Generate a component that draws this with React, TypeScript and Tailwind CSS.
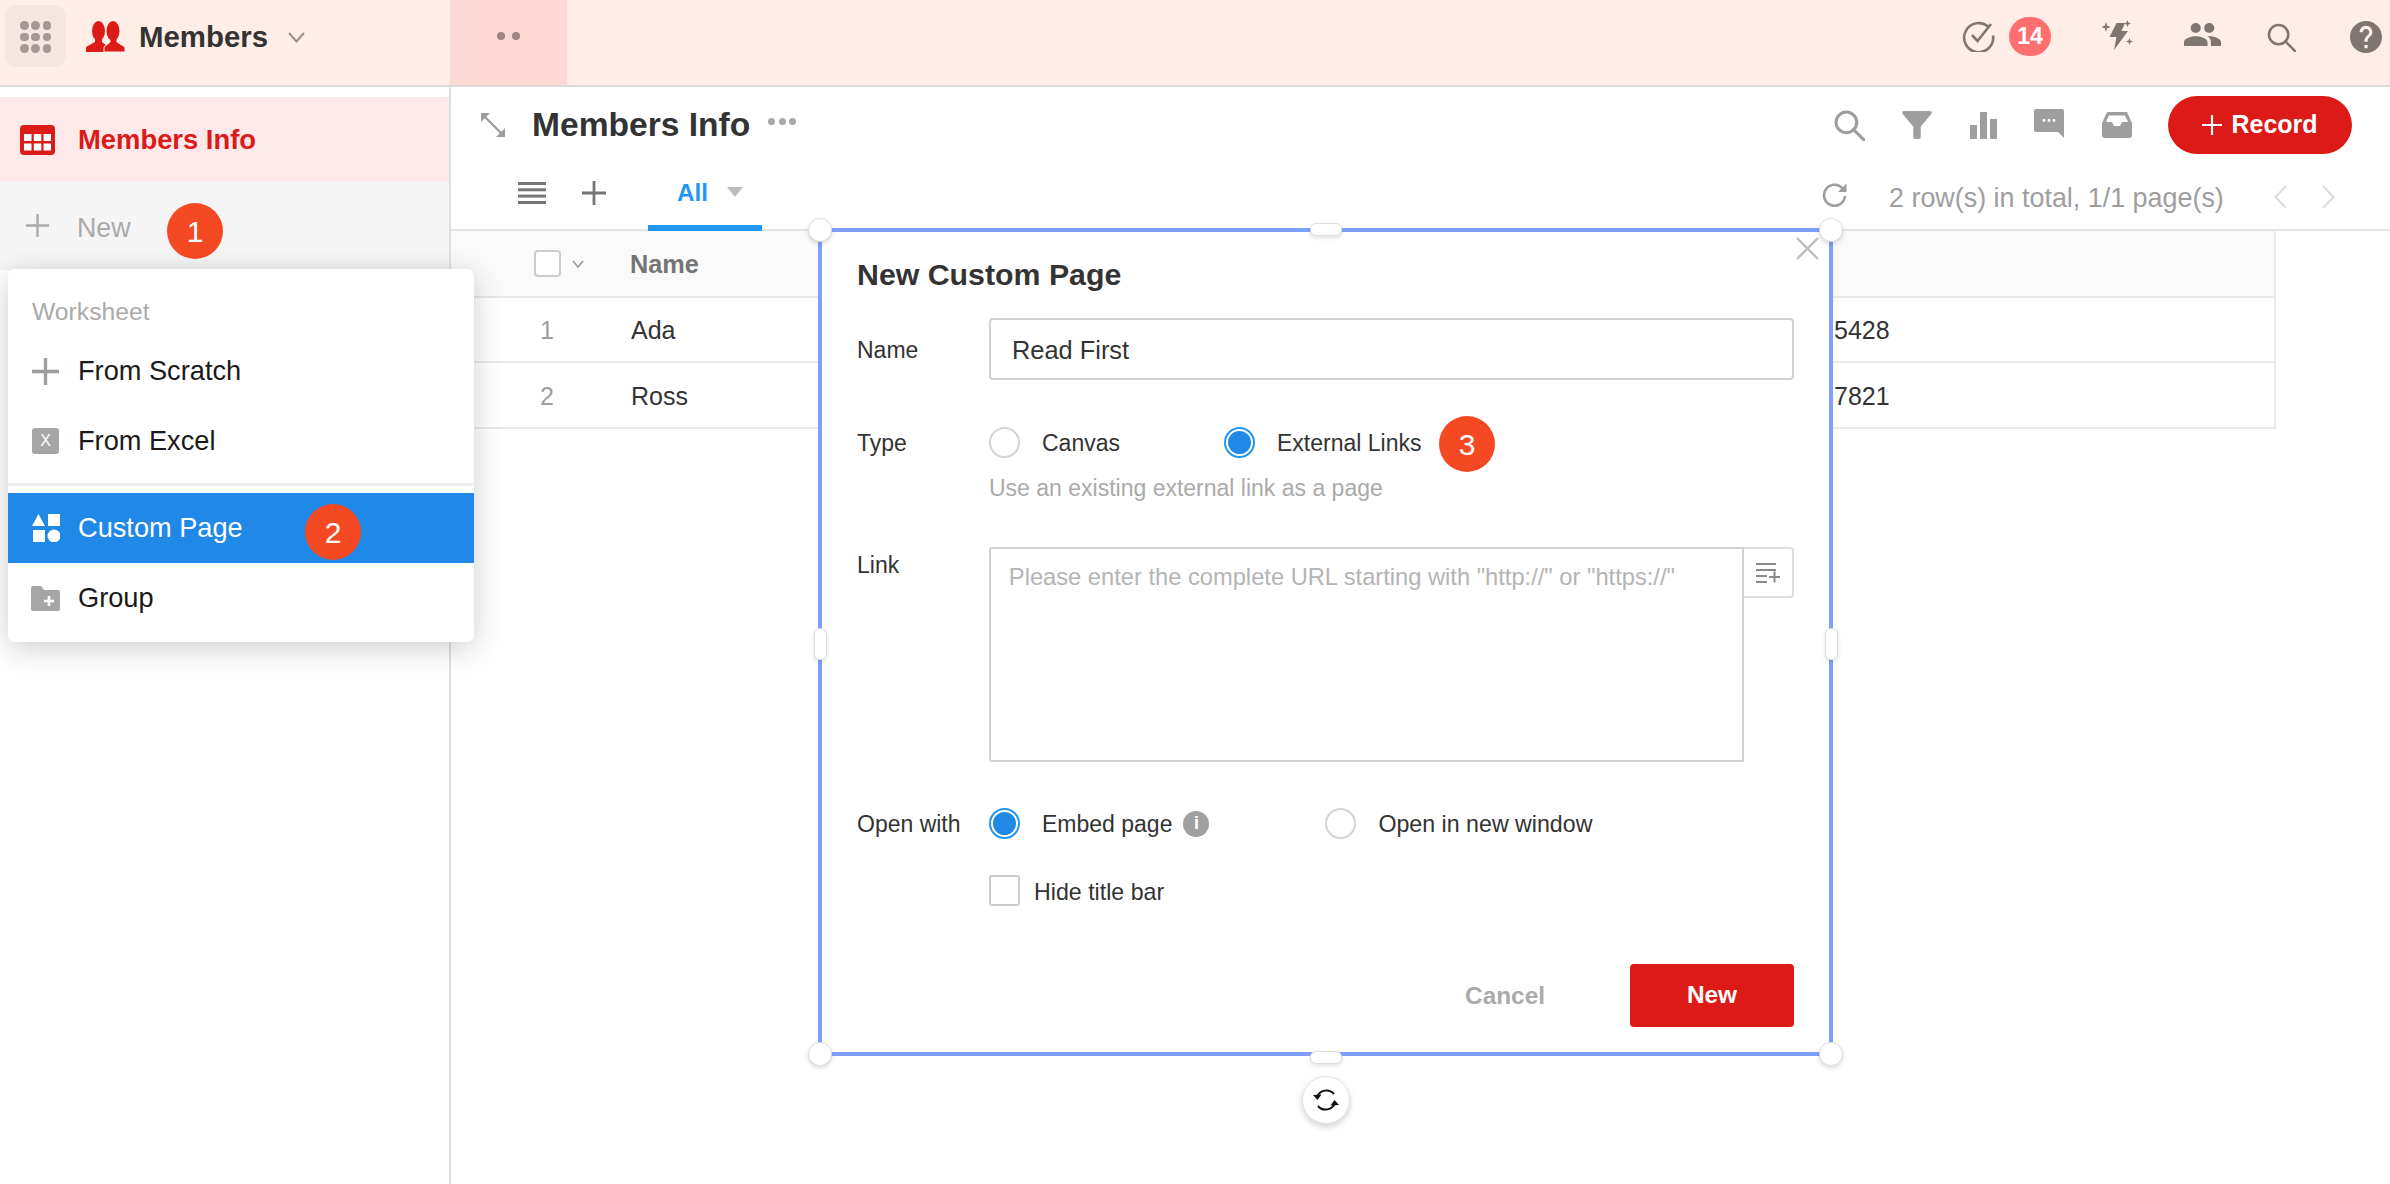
import React from "react";

const Badge = ({ n, className }: { n: string; className: string }) => (
  <div className={`absolute w-[56px] h-[56px] rounded-full bg-[#f44923] text-white text-[30px] flex items-center justify-center ${className}`}>{n}</div>
);

const Radio = ({ on = false }: { on?: boolean }) =>
  on ? (
    <span className="w-[31px] h-[31px] rounded-full border-2 border-[#2196f3] flex items-center justify-center shrink-0">
      <span className="w-[23px] h-[23px] rounded-full bg-[#2088e6]" />
    </span>
  ) : (
    <span className="w-[31px] h-[31px] rounded-full border-2 border-[#d4d4d4] shrink-0" />
  );

const SearchIcon = ({ color, size, sw }: { color: string; size: number; sw: number }) => (
  <svg width={size} height={size} viewBox="0 0 30 30" fill="none" stroke={color} strokeWidth={sw}>
    <circle cx="12" cy="12" r="10" />
    <path d="M19 19 L29 29" strokeLinecap="round" />
  </svg>
);

const Plus = ({ size, color, sw }: { size: number; color: string; sw: number }) => (
  <svg width={size} height={size} viewBox="0 0 24 24" stroke={color} strokeWidth={sw} fill="none">
    <path d="M12 0V24M0 12H24" />
  </svg>
);

const Corner = ({ className }: { className: string }) => (
  <div className={`absolute w-[24px] h-[24px] rounded-full bg-white border border-[#ddd] shadow-[0_2px_4px_rgba(0,0,0,0.15)] ${className}`} />
);

export default function App() {
  return (
    <div className="relative w-[2390px] h-[1184px] overflow-hidden bg-white flex flex-col font-['Liberation_Sans',Arial,sans-serif] text-[#333]">
      {/* top bar */}
      <header className="h-[87px] shrink-0 bg-[#ffeee7] border-b-2 border-[#dedada] flex items-stretch">
        <div className="w-[450px] flex items-start pl-[5px] pt-[5px]">
          <div className="w-[61px] h-[62px] rounded-[12px] bg-[#f6e6e1] grid grid-cols-3 gap-x-[3px] gap-y-[3px] px-[15px] py-[16px]">
            {Array.from({ length: 9 }).map((_, i) => (
              <span key={i} className="w-[8.5px] h-[8.5px] rounded-full bg-[#a39894]" />
            ))}
          </div>
          <svg className="ml-[20px] mt-[16px]" width="39" height="31" viewBox="0 0 39 31" fill="#dc1a18">
            <ellipse cx="12.5" cy="10" rx="6.5" ry="10" />
            <path d="M9 16 H16 V21 L21 25 V31 H0 V26 L9 21Z" />
            <path d="M24 16 H31 V21 L39 26 V31 H18 V26 L24 21Z" stroke="#ffeee7" strokeWidth="1" />
            <ellipse cx="27" cy="10" rx="6.5" ry="10" />
          </svg>
          <span className="ml-[14px] mt-[15px] text-[29.4px] leading-[34px] font-bold text-[#333]">Members</span>
          <svg className="ml-[20px] mt-[27px]" width="17" height="11" viewBox="0 0 17 11" fill="none" stroke="#9a9090" strokeWidth="2">
            <path d="M1 1 L8.5 9.5 L16 1" />
          </svg>
        </div>
        <div className="w-[117px] bg-[#fdd8d4] flex items-start justify-center gap-[7px] pt-[32px]">
          <span className="w-[8px] h-[8px] rounded-full bg-[#9c8582]" />
          <span className="w-[8px] h-[8px] rounded-full bg-[#9c8582]" />
        </div>
        <div className="ml-auto pr-[8px] flex items-start pt-[17px]">
          <svg className="mt-[2px]" width="33" height="33" viewBox="0 0 33 33" fill="none" stroke="#7f7672" strokeWidth="2.6">
            <path d="M27 8.5 A14.5 14.5 0 1 0 31 16.5" />
            <path d="M10 16 L15.5 22 L29 5" />
          </svg>
          <span className="ml-[14px] w-[42px] h-[39px] rounded-full bg-[#ff6f70] text-white font-bold text-[23px] flex items-center justify-center">14</span>
          <svg className="ml-[51px] mt-[3px]" width="31" height="30" viewBox="0 0 31 30" fill="#7f7672">
            <path d="M14.5 3 L23 3 L19.5 11 L26 11 L12 30 L14.5 17 L7.5 17 Z" />
            <path d="M4 2 L5.2 5.8 L9 7 L5.2 8.2 L4 12 L2.8 8.2 L-1 7 L2.8 5.8Z" />
            <path d="M25.5 0 L26.4 2.6 L29 3.5 L26.4 4.4 L25.5 7 L24.6 4.4 L22 3.5 L24.6 2.6Z" />
            <path d="M27.5 18 L28.4 20.6 L31 21.5 L28.4 22.4 L27.5 25 L26.6 22.4 L24 21.5 L26.6 20.6Z" />
          </svg>
          <svg className="ml-[51px] mt-[6px]" width="37" height="23" viewBox="1 5 22 14" preserveAspectRatio="none" fill="#7f7672">
            <path d="M16 11c1.66 0 2.99-1.34 2.99-3S17.66 5 16 5c-1.66 0-3 1.34-3 3s1.34 3 3 3zm-8 0c1.66 0 2.99-1.34 2.99-3S9.66 5 8 5C6.34 5 5 6.34 5 8s1.34 3 3 3zm0 2c-2.33 0-7 1.17-7 3.5V19h14v-2.5c0-2.33-4.67-3.5-7-3.5zm8 0c-.29 0-.62.02-.97.05 1.16.84 1.97 1.97 1.97 3.45V19h6v-2.5c0-2.33-4.67-3.5-7-3.5z" />
          </svg>
          <span className="ml-[46px] mt-[6px]"><SearchIcon color="#7f7672" size={29} sw={2.6} /></span>
          <svg className="ml-[54px] mt-[4px]" width="32" height="32" viewBox="2 2 20 20" fill="#7f7672">
            <path d="M12 2C6.48 2 2 6.48 2 12s4.48 10 10 10 10-4.48 10-10S17.52 2 12 2zm1 17h-2v-2h2v2zm2.07-7.75l-.9.92C13.45 12.9 13 13.5 13 15h-2v-.5c0-1.1.45-2.1 1.17-2.83l1.24-1.26c.37-.36.59-.86.59-1.41 0-1.1-.9-2-2-2s-2 .9-2 2H8c0-2.21 1.79-4 4-4s4 1.79 4 4c0 .88-.36 1.68-.93 2.25z" />
          </svg>
        </div>
      </header>

      <div className="flex-1 flex min-h-0">
        {/* sidebar */}
        <aside className="w-[451px] shrink-0 border-r-2 border-[#e0e0e0] pt-[10px]">
          <div className="h-[85px] bg-[#fde8ea] flex items-center pl-[20px]">
            <svg width="35" height="30" viewBox="0 0 35 30">
              <rect width="35" height="30" rx="4" fill="#dc1a18" />
              <g fill="#fff">
                <rect x="4" y="9" width="7.5" height="7" /><rect x="13.8" y="9" width="7.5" height="7" /><rect x="23.5" y="9" width="7.5" height="7" />
                <rect x="4" y="18.5" width="7.5" height="7" /><rect x="13.8" y="18.5" width="7.5" height="7" /><rect x="23.5" y="18.5" width="7.5" height="7" />
              </g>
            </svg>
            <span className="ml-[23px] text-[27.4px] font-bold text-[#dc1a18]">Members Info</span>
          </div>
          <div className="h-[88px] bg-[#f5f5f5] flex items-start pl-[26px] pt-[32px]">
            <Plus size={23} color="#aaa" sw={2.5} />
            <span className="ml-[28px] -mt-[6px] text-[26.8px] text-[#aaa]">New</span>
          </div>
        </aside>

        {/* main */}
        <main className="flex-1 min-w-0 flex flex-col">
          <div className="h-[76px] shrink-0 flex items-center pl-[29px] pr-[38px]">
            <svg width="26" height="26" viewBox="0 0 26 26" fill="none" stroke="#9e9e9e" strokeWidth="2.4">
              <path d="M3 3 L23 23" />
              <path d="M1 10 V1 H10 Z" fill="#9e9e9e" stroke="none" />
              <path d="M25 16 V25 H16 Z" fill="#9e9e9e" stroke="none" />
            </svg>
            <span className="ml-[26px] text-[33.6px] font-bold text-[#333]">Members Info</span>
            <span className="ml-[18px] mb-[8px] flex gap-[3.5px]">
              <i className="w-[7px] h-[7px] rounded-full bg-[#a8a8a8]" />
              <i className="w-[7px] h-[7px] rounded-full bg-[#a8a8a8]" />
              <i className="w-[7px] h-[7px] rounded-full bg-[#a8a8a8]" />
            </span>
            <div className="ml-auto flex items-center">
              <span className="w-[32px] ml-[1px]"><SearchIcon color="#9e9e9e" size={31} sw={3} /></span>
              <svg className="ml-[36px]" width="30" height="28" viewBox="4 4 16 16" preserveAspectRatio="none" fill="#9e9e9e">
                <path d="M4.25 5.61C6.27 8.2 10 13 10 13v6c0 .55.45 1 1 1h2c.55 0 1-.45 1-1v-6s3.72-4.8 5.74-7.39c.51-.66.04-1.61-.79-1.61H5.04c-.83 0-1.3.95-.79 1.61z" />
              </svg>
              <svg className="ml-[38px]" width="27" height="27" viewBox="0 0 27 27" fill="#9e9e9e">
                <rect x="0" y="13" width="7" height="14" /><rect x="10" y="0" width="7" height="27" /><rect x="20" y="7" width="7" height="20" />
              </svg>
              <svg className="ml-[37px] mb-[3px]" width="30" height="29" viewBox="0 0 30 29" fill="#9e9e9e">
                <path d="M2 0 H28 A2 2 0 0 1 30 2 V29 L24 23 H2 A2 2 0 0 1 0 21 V2 A2 2 0 0 1 2 0Z" />
                <circle cx="10" cy="11.5" r="1.4" fill="#fff" /><circle cx="15" cy="11.5" r="1.4" fill="#fff" /><circle cx="20" cy="11.5" r="1.4" fill="#fff" />
              </svg>
              <svg className="ml-[38px]" width="30" height="26" viewBox="0 0 30 26" fill="#9e9e9e">
                <path d="M5 0 H25 L30 11 V23 A3 3 0 0 1 27 26 H3 A3 3 0 0 1 0 23 V11 Z" />
                <path d="M4 10 H10 L12 14 H18 L20 10 H26 L23 3.5 H7 Z" fill="#fff" />
              </svg>
              <button className="ml-[36px] w-[184px] h-[58px] rounded-full bg-[#dc1a18] text-white font-bold text-[25px] flex items-center justify-center gap-[9px]">
                <Plus size={20} color="#fff" sw={2.6} />
                Record
              </button>
            </div>
          </div>

          <div className="h-[68px] shrink-0 border-b-2 border-[#e4e4e4] flex items-stretch pl-[67px] pr-[55px]">
            <div className="flex items-center pb-[6px]">
              <svg width="28" height="22" viewBox="0 0 28 22" fill="#757575">
                <rect width="28" height="3" /><rect y="6.3" width="28" height="3" /><rect y="12.6" width="28" height="3" /><rect y="19" width="28" height="3" />
              </svg>
              <span className="ml-[36px]"><Plus size={24} color="#757575" sw={2.8} /></span>
            </div>
            <div className="ml-[42px] w-[114px] border-b-[6px] border-[#2196f3] flex items-center pl-[29px] -mb-[2px] pb-[2px]">
              <span className="text-[24.3px] font-bold text-[#2196f3]">All</span>
              <svg className="ml-[19px] mb-[3px]" width="16" height="10" viewBox="0 0 16 10" fill="#bdbdbd"><path d="M0 0H16L8 10Z" /></svg>
            </div>
            <div className="ml-auto flex items-center pt-[2px]">
              <svg className="mb-[3px]" width="26" height="25" viewBox="0 0 26 25" fill="none" stroke="#9e9e9e" strokeWidth="2.6">
                <path d="M22 6 A10.5 10.5 0 1 0 24 13" />
                <path d="M25.5 0.5 V9 H17Z" fill="#9e9e9e" stroke="none" />
              </svg>
              <span className="ml-[42px] w-[337px] pt-[2px] text-[26.9px] text-[#9e9e9e] whitespace-nowrap">2 row(s) in total, 1/1 page(s)</span>
              <svg className="ml-[48px]" width="13" height="24" viewBox="0 0 13 24" fill="none" stroke="#ddd" strokeWidth="2.2"><path d="M12 1 L1.5 12 L12 23" /></svg>
              <svg className="ml-[35px]" width="13" height="24" viewBox="0 0 13 24" fill="none" stroke="#ddd" strokeWidth="2.2"><path d="M1 1 L11.5 12 L1 23" /></svg>
            </div>
          </div>

          <div className="w-[1825px] border-r-2 border-[#eaeaea] text-[25px]">
            <div className="h-[67px] bg-[#fafafa] border-b-2 border-[#e8e8e8] grid grid-cols-[179px_1204px_1fr] items-center">
              <div className="pl-[83px] flex items-center">
                <span className="w-[27px] h-[27px] rounded-[4px] border-2 border-[#ccc] bg-white" />
                <svg className="ml-[11px]" width="12" height="8" viewBox="0 0 12 8" fill="none" stroke="#999" strokeWidth="1.6"><path d="M1 1 L6 7 L11 1" /></svg>
              </div>
              <span className="pt-[3px] font-bold text-[#757575] text-[25.3px]">Name</span>
            </div>
            <div className="h-[65px] pt-[3px] border-b-2 border-[#eaeaea] grid grid-cols-[180px_1203px_1fr] items-center">
              <span className="pl-[89px] text-[#9e9e9e]">1</span>
              <span className="text-[#333]">Ada</span>
              <span className="text-[#333]">5428</span>
            </div>
            <div className="h-[66px] pt-[3px] border-b-2 border-[#eaeaea] grid grid-cols-[180px_1203px_1fr] items-center">
              <span className="pl-[89px] text-[#9e9e9e]">2</span>
              <span className="text-[#333]">Ross</span>
              <span className="text-[#333]">7821</span>
            </div>
          </div>
        </main>
      </div>

      {/* + New dropdown */}
      <div className="absolute left-[8px] top-[269px] w-[466px] bg-white rounded-[7px] shadow-[0_6px_30px_rgba(0,0,0,0.2)] pt-[26px] pb-[9px] text-[27.2px] text-[#1a1a1a]">
        <div className="h-[34px] pl-[24px] flex items-center text-[24.7px] text-[#aaa]">Worksheet</div>
        <div className="mt-[7px] h-[70px] pl-[24px] flex items-center">
          <span className="w-[27px]"><Plus size={27} color="#9e9e9e" sw={3} /></span>
          <span className="ml-[19px]">From Scratch</span>
        </div>
        <div className="h-[70px] pl-[24px] flex items-center">
          <span className="w-[27px] h-[26px] rounded-[3px] bg-[#a6a6a6] text-white text-[16px] flex items-center justify-center">X</span>
          <span className="ml-[19px]">From Excel</span>
        </div>
        <div className="mt-[7px] h-[3px] bg-[#f0f0f0]" />
        <div className="mt-[7px] h-[70px] bg-[#2088e6] pl-[24px] flex items-center text-white">
          <svg width="28" height="28" viewBox="0 0 28 28" fill="#fff">
            <path d="M6.5 0 L13 12 H0Z" />
            <rect x="16" y="0" width="12" height="12" />
            <rect x="1" y="16" width="12" height="12" />
            <circle cx="22" cy="22" r="6.5" />
          </svg>
          <span className="ml-[18px]">Custom Page</span>
        </div>
        <div className="h-[70px] pl-[23px] flex items-center">
          <svg width="29" height="25" viewBox="0 0 29 25" fill="#a6a6a6">
            <path d="M2 0 H10 L13 4 H27 A2 2 0 0 1 29 6 V23 A2 2 0 0 1 27 25 H2 A2 2 0 0 1 0 23 V2 A2 2 0 0 1 2 0Z" />
            <path d="M18 10 V20 M13 15 H23" stroke="#fff" strokeWidth="2.6" />
          </svg>
          <span className="ml-[18px]">Group</span>
        </div>
      </div>

      {/* dialog with selection frame */}
      <div className="absolute left-[818px] top-[228px] w-[1015px] h-[828px] bg-white border-4 border-[#7f9fff] text-[23px] text-[#333]">
        <div className="pl-[35px] pr-[35px] pt-[23px] flex flex-col">
          <div className="text-[30.3px] leading-[40px] font-bold text-[#333]">New Custom Page</div>
          <div className="mt-[23px] flex items-center h-[62px]">
            <span className="w-[132px] pt-[2px]">Name</span>
            <input readOnly value="Read First" className="w-[805px] h-full border-2 border-[#d0d0d0] rounded-[4px] px-[21px] pt-[2px] text-[25.4px] text-[#333] outline-none" />
          </div>
          <div className="mt-[47px] flex items-center h-[31px]">
            <span className="w-[132px] pt-[1px]">Type</span>
            <Radio />
            <span className="ml-[22px] w-[182px] pt-[1px]">Canvas</span>
            <Radio on />
            <span className="ml-[22px] pt-[1px]">External Links</span>
          </div>
          <div className="mt-[15px] h-[30px] pl-[132px] flex items-center text-[#aaa]">Use an existing external link as a page</div>
          <div className="mt-[44px] flex items-start">
            <span className="w-[132px] leading-[32px] pt-[2px]">Link</span>
            <textarea readOnly placeholder={'Please enter the complete URL starting with "http://" or "https://"'} className="w-[756px] h-[215px] resize-none border-2 border-[#d0d0d0] rounded-l-[3px] px-[18px] py-[11px] text-[23.7px] placeholder:text-[#b4b4b4] outline-none" />
            <span className="w-[50px] h-[51px] border-2 border-l-0 border-[#ddd] rounded-r-[4px] flex items-center justify-center">
              <svg width="24" height="20" viewBox="0 0 24 20" fill="none" stroke="#8a8a8a" strokeWidth="2">
                <path d="M0 1 H20 M0 7 H20 M0 13 H11 M0 19 H11 M13 14 H24 M18.5 8.5 V19.5" />
              </svg>
            </span>
          </div>
          <div className="mt-[46px] flex items-center h-[31px]">
            <span className="w-[132px] pt-[1px]">Open with</span>
            <Radio on />
            <span className="ml-[22px] pt-[1px]">Embed page</span>
            <span className="ml-[11px] w-[26px] h-[26px] rounded-full bg-[#a0a0a0] text-white text-[18px] font-bold flex items-center justify-center">i</span>
            <span className="ml-[116px] flex"><Radio /></span>
            <span className="ml-[22px] pt-[1px] text-[23.2px]">Open in new window</span>
          </div>
          <div className="mt-[36px] flex items-center h-[31px] pl-[132px]">
            <span className="w-[31px] h-[31px] rounded-[3px] border-2 border-[#ccc]" />
            <span className="ml-[14px] pt-[3px] text-[23.2px]">Hide title bar</span>
          </div>
          <div className="mt-[58px] w-[937px] flex items-center justify-end">
            <span className="text-[24.4px] pt-[2px] font-bold text-[#aaa] mr-[85px]">Cancel</span>
            <button className="w-[164px] h-[63px] rounded-[4px] bg-[#dc1a18] text-white text-[24.4px] font-bold">New</button>
          </div>
        </div>

        <svg className="absolute right-[10px] top-[5px]" width="23" height="23" viewBox="0 0 23 23" stroke="#bdbdbd" strokeWidth="2.4"><path d="M1 1 L22 22 M22 1 L1 22" /></svg>

        <Corner className="-left-[14px] -top-[14px]" />
        <Corner className="-right-[14px] -top-[14px]" />
        <Corner className="-left-[14px] -bottom-[14px]" />
        <Corner className="-right-[14px] -bottom-[14px]" />
        <div className="absolute left-[488px] -top-[9px] w-[32px] h-[13px] rounded-[6px] bg-white border border-[#ddd] shadow-[0_2px_4px_rgba(0,0,0,0.12)]" />
        <div className="absolute left-[488px] -bottom-[12px] w-[32px] h-[13px] rounded-[6px] bg-white border border-[#ddd] shadow-[0_2px_4px_rgba(0,0,0,0.12)]" />
        <div className="absolute -left-[8px] top-[396px] w-[13px] h-[32px] rounded-[6px] bg-white border border-[#ddd] shadow-[0_2px_4px_rgba(0,0,0,0.12)]" />
        <div className="absolute -right-[9px] top-[396px] w-[13px] h-[32px] rounded-[6px] bg-white border border-[#ddd] shadow-[0_2px_4px_rgba(0,0,0,0.12)]" />
        <div className="absolute left-[480px] -bottom-[72px] w-[48px] h-[48px] rounded-full bg-white border border-[#e4e4e4] shadow-[0_3px_6px_rgba(0,0,0,0.18)] flex items-center justify-center">
          <svg width="28" height="28" viewBox="0 0 28 28" fill="none" stroke="#111" strokeWidth="2">
            <path d="M5 11 A10 10 0 0 1 22 8" />
            <path d="M23 17 A10 10 0 0 1 6 20" />
            <path d="M1 9 L5.5 14 L9.5 8.5Z" fill="#111" stroke="none" />
            <path d="M27 19 L22.5 14 L18.5 19.5Z" fill="#111" stroke="none" />
          </svg>
        </div>
      </div>

      <Badge n="1" className="left-[167px] top-[203px]" />
      <Badge n="2" className="left-[305px] top-[504px]" />
      <Badge n="3" className="left-[1439px] top-[416px]" />
    </div>
  );
}
